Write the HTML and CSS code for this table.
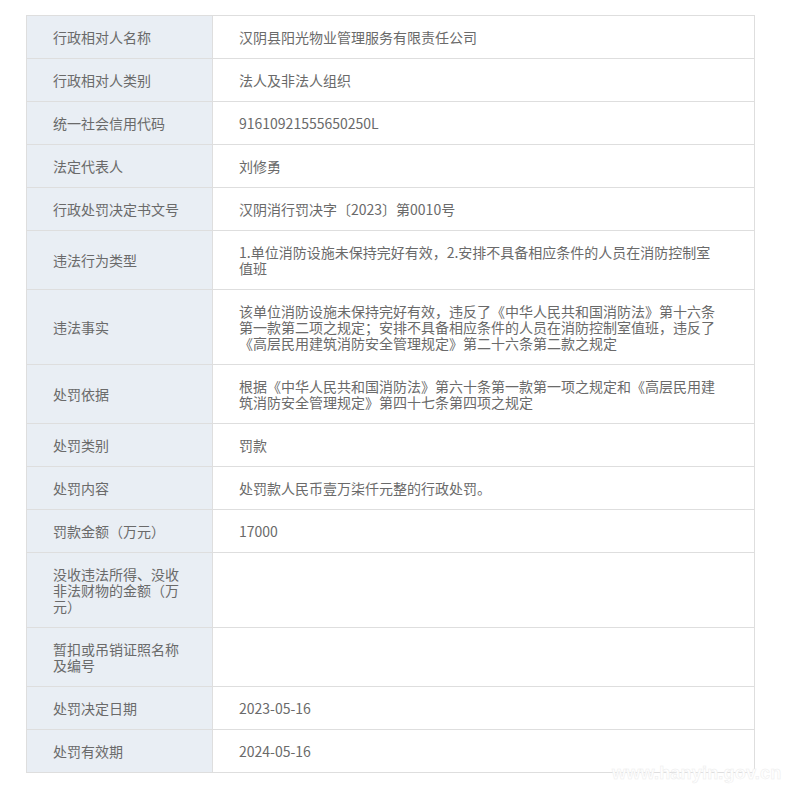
FILE: index.html
```html
<!DOCTYPE html>
<html lang="zh-CN">
<head>
<meta charset="utf-8">
<title>行政处罚</title>
<link rel="stylesheet" href="styles.css">
</head>
<body>
<div class="page">
  <div class="grid">
    <div class="label">行政相对人名称</div><div class="value">汉阴县阳光物业管理服务有限责任公司</div>
    <div class="label">行政相对人类别</div><div class="value">法人及非法人组织</div>
    <div class="label">统一社会信用代码</div><div class="value">91610921555650250L</div>
    <div class="label">法定代表人</div><div class="value">刘修勇</div>
    <div class="label">行政处罚决定书文号</div><div class="value">汉阴消行罚决字〔2023〕第0010号</div>
    <div class="label">违法行为类型</div><div class="value">1.单位消防设施未保持完好有效，2.安排不具备相应条件的人员在消防控制室值班</div>
    <div class="label">违法事实</div><div class="value">该单位消防设施未保持完好有效，违反了《中华人民共和国消防法》第十六条第一款第二项之规定；安排不具备相应条件的人员在消防控制室值班，违反了《高层民用建筑消防安全管理规定》第二十六条第二款之规定</div>
    <div class="label">处罚依据</div><div class="value">根据《中华人民共和国消防法》第六十条第一款第一项之规定和《高层民用建筑消防安全管理规定》第四十七条第四项之规定</div>
    <div class="label">处罚类别</div><div class="value">罚款</div>
    <div class="label">处罚内容</div><div class="value">处罚款人民币壹万柒仟元整的行政处罚。</div>
    <div class="label">罚款金额（万元）</div><div class="value">17000</div>
    <div class="label">没收违法所得、没收非法财物的金额（万元）</div><div class="value"></div>
    <div class="label">暂扣或吊销证照名称及编号</div><div class="value"></div>
    <div class="label">处罚决定日期</div><div class="value">2023-05-16</div>
    <div class="label">处罚有效期</div><div class="value">2024-05-16</div>
  </div>
  <div class="watermark">www.hanyin.gov.cn</div>
</div>
</body>
</html>
```

FILE: styles.css
```css
html, body {
  margin: 0;
  padding: 0;
  background: #ffffff;
}

.page {
  position: relative;
  width: 801px;
  height: 804px;
  padding: 15px 0 0 26px;
  box-sizing: border-box;
  font-family: "Noto Sans CJK SC", "Noto Sans", sans-serif;
  font-size: 14px;
  line-height: 16px;
  color: #6a6a6a;
}

.grid {
  display: grid;
  grid-template-columns: 186px 542px;
  width: 729px;
  box-sizing: border-box;
  border-top: 1px solid #dedede;
  border-left: 1px solid #dedede;
}

.label,
.value {
  display: flex;
  align-items: center;
  min-height: 16px;
  border-right: 1px solid #dedede;
  border-bottom: 1px solid #dedede;
  word-break: break-all;
}

.label {
  background: #e9eef4;
  padding: 13px 26px;
}

.value {
  background: #ffffff;
  padding: 13px 35px 13px 26px;
}

.watermark {
  position: absolute;
  left: 612px;
  top: 763px;
  font-family: "Liberation Sans", Arial, sans-serif;
  font-weight: bold;
  font-size: 18px;
  line-height: 20px;
  color: #ffffff;
  -webkit-text-stroke: 0.5px #ececec;
  letter-spacing: 0.2px;
}
```
